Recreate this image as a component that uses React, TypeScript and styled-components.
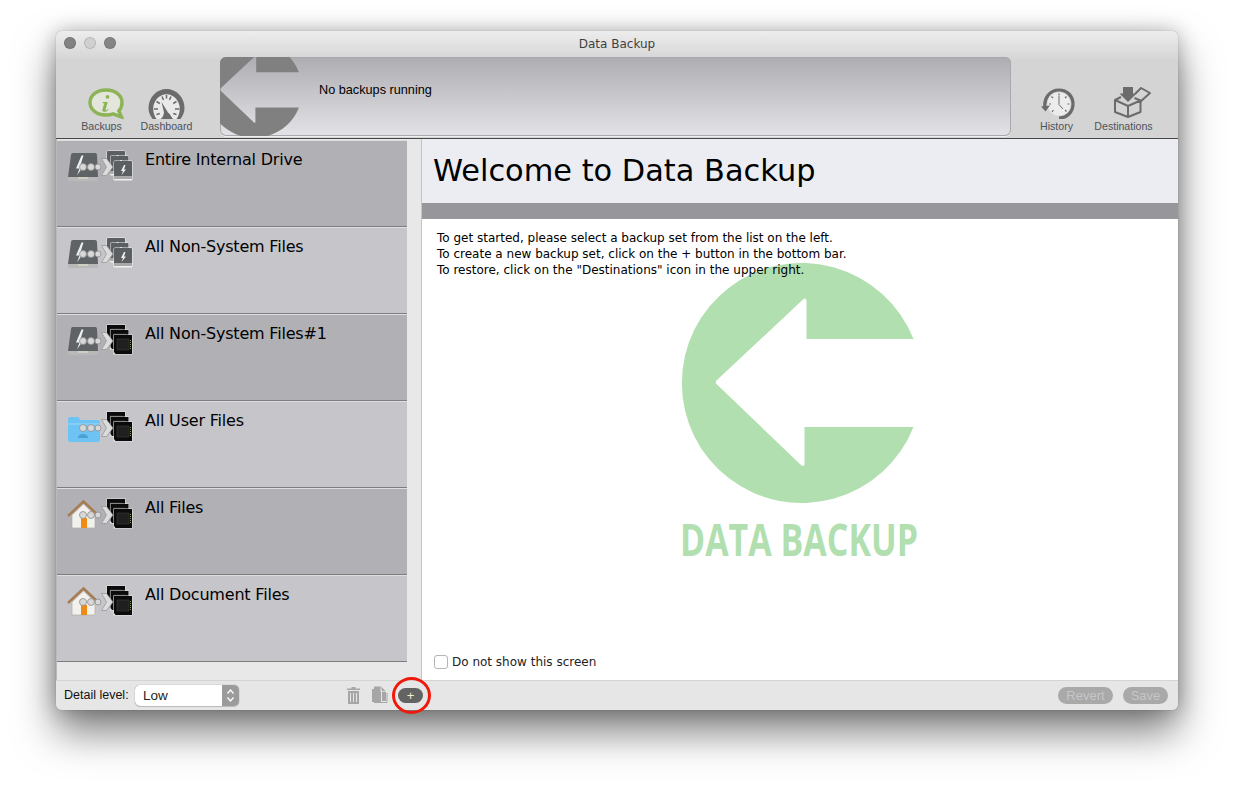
import React from "react";
import styled, { createGlobalStyle } from "styled-components";

const Global = createGlobalStyle`
  html, body { margin: 0; padding: 0; background: #fff; }
  body { font-family: "DejaVu Sans", "Liberation Sans", sans-serif; overflow: hidden; }
  #root { width: 1234px; height: 790px; }
`;

const Page = styled.div`
  padding: 31px 56px;
  box-sizing: border-box;
  width: 1234px;
  height: 790px;
`;

const Win = styled.div`
  width: 1122px;
  height: 679px;
  border-radius: 6px;
  display: flex;
  flex-direction: column;
  background: #e6e6e6;
  box-shadow: 0 22px 40px rgba(0, 0, 0, 0.5), 0 0 20px rgba(0, 0, 0, 0.25), 0 0 1px rgba(0, 0, 0, 0.45);
`;

const Header = styled.header`
  height: 108px;
  box-sizing: border-box;
  flex: none;
  border-bottom: 1px solid #45474a;
  border-radius: 6px 6px 0 0;
  background: linear-gradient(#ededed 0, #d4d4d4 30px, #d4d4d4 100%);
  display: flex;
  flex-direction: column;
`;

const TitleBar = styled.div`
  height: 26px;
  flex: none;
  display: flex;
  align-items: center;
  position: relative;
  justify-content: center;
  font-size: 12px;
  color: #3f3f3f;
`;

const Lights = styled.div`
  position: absolute;
  left: 8px;
  top: 6px;
  display: flex;
  gap: 8px;
`;

const Light = styled.span<{ $c: string }>`
  width: 12px;
  height: 12px;
  border-radius: 50%;
  background: ${(p) => p.$c};
  box-shadow: inset 0 0 0 1px rgba(0, 0, 0, 0.12);
`;

const ToolRow = styled.div`
  display: flex;
  height: 79px;
  padding: 0 21px 0 13px;
`;

const ToolGroup = styled.div`
  display: flex;
  flex: none;
`;

const Tool = styled.div<{ $w?: number }>`
  width: ${(p) => p.$w ?? 65}px;
  display: flex;
  flex-direction: column;
  align-items: center;
  justify-content: flex-end;
  padding-bottom: 3px;
  font-family: "Liberation Sans", sans-serif;
  font-size: 10.6px;
  line-height: 13px;
  color: #4c525c;
`;

const ToolIcon = styled.div<{ $shift?: number }>`
  margin-left: ${(p) => p.$shift ?? 0}px;
  margin-bottom: 1px;
  svg { display: block; }
`;

const Status = styled.div`
  flex: 1;
  margin: 0 12px 0 21px;
  border-radius: 6px;
  background: linear-gradient(#aeadb2, #e3e3e7);
  box-shadow: 0 0 0 1px #a9a9ad inset, 0 1px 0 #f0f0f0;
  display: flex;
  overflow: hidden;
`;

const StatusLogo = styled.svg`
  width: 80px;
  height: 79px;
  flex: none;
`;

const StatusText = styled.div`
  margin: 26px 0 0 19px;
  font-size: 12.7px;
  line-height: 14px;
  font-family: "Liberation Sans", sans-serif;
  color: #000;
`;

const Main = styled.div`
  flex: 1;
  display: flex;
  min-height: 0;
`;

const Sidebar = styled.aside`
  width: 366px;
  flex: none;
  box-sizing: border-box;
  padding-top: 1px;
  background: #e8e8e8;
  border-right: 1px solid #c4c4c4;
  border-left: 1px solid #b9b9b9;
`;

const List = styled.div`
  width: 350px;
  display: flex;
  flex-direction: column;
`;

const Row = styled.div<{ $dark: boolean }>`
  height: 87px;
  box-sizing: border-box;
  display: flex;
  align-items: flex-start;
  padding: 9px 0 0 10px;
  background: ${(p) => (p.$dark ? "#b1b0b5" : "#c6c5c9")};
  border-top: 1px solid #dedede;
  border-bottom: 1px solid #7e7e80;
`;

const RowLabel = styled.div`
  margin-left: 12px;
  font-size: 16px;
  line-height: 20px;
  letter-spacing: -0.2px;
  color: #000;
`;

const Content = styled.section`
  flex: 1;
  background: #fff;
  display: flex;
  flex-direction: column;
  position: relative;
`;

const Hero = styled.div`
  height: 64px;
  flex: none;
  box-sizing: border-box;
  padding: 0 0 2px 11px;
  background: #ebedf2;
  display: flex;
  align-items: center;
  font-size: 30.4px;
  color: #000;
`;

const Band = styled.div`
  height: 16px;
  flex: none;
  background: #97979b;
`;

const Intro = styled.div`
  position: relative;
  z-index: 1;
  padding: 11px 0 0 15px;
  font-size: 12px;
  line-height: 16px;
  color: #000;
  flex: 1;
`;

const Watermark = styled.svg`
  position: absolute;
  left: 259px;
  top: 123px;
  width: 240px;
  height: 300px;
  overflow: visible;
`;

const CheckRow = styled.label`
  display: flex;
  align-items: center;
  gap: 4px;
  padding: 0 0 10px 12px;
  font-size: 12px;
  line-height: 16px;
  color: #222;
`;

const Box = styled.span`
  width: 12px;
  height: 12px;
  border: 1px solid #b5b5b5;
  border-radius: 3px;
  background: #fff;
`;

const Footer = styled.footer`
  height: 30px;
  flex: none;
  box-sizing: border-box;
  display: flex;
  align-items: center;
  padding: 0 10px 1px 8px;
  background: #e6e6e6;
  border-top: 1px solid #d4d4d4;
  border-radius: 0 0 6px 6px;
  font-family: "Liberation Sans", sans-serif;
  position: relative;
`;

const DetailLabel = styled.span`
  font-size: 12.5px;
  width: 65px;
  white-space: nowrap;
  color: #111;
`;

const Select = styled.div`
  margin-left: 6px;
  width: 104px;
  height: 21px;
  border-radius: 5px;
  background: #fff;
  box-shadow: 0 0 1px rgba(0, 0, 0, 0.5), 0 1px 1px rgba(0, 0, 0, 0.15);
  display: flex;
  align-items: center;
  justify-content: space-between;
  padding-left: 8px;
  box-sizing: border-box;
  font-size: 13.5px;
  color: #222;
  overflow: hidden;
`;

const SelectArrows = styled.div`
  width: 17px;
  height: 100%;
  background: #9b9b9b;
  display: flex;
  align-items: center;
  justify-content: center;
`;

const FooterIcons = styled.div`
  margin-left: 107px;
  display: flex;
  align-items: center;
  gap: 10px;
`;

const PlusWrap = styled.div`
  position: relative;
`;

const PlusBtn = styled.div`
  width: 25px;
  height: 15px;
  border-radius: 8px;
  background: #636363;
  color: #f5eecb;
  font-size: 13px;
  line-height: 15px;
  text-align: center;
`;

const Ring = styled.div`
  position: absolute;
  left: -6px;
  right: -8px;
  top: -11px;
  bottom: -11px;
  border: 3px solid #f0180a;
  border-radius: 50%;
`;

const Actions = styled.div`
  margin-left: auto;
  display: flex;
  gap: 10px;
`;

const Pill = styled.div<{ $w: number }>`
  width: ${(p) => p.$w}px;
  height: 17px;
  border-radius: 9px;
  background: #a9a9a9;
  color: #c6c6c6;
  font-size: 13px;
  line-height: 17px;
  text-align: center;
`;

const LOGO =
  "M913.5 339H806.5V301Q806 297 803 299.5L717 380Q714.5 382 717 384.5L801 465Q804.5 467.5 804.5 464V427H913.5A120 120 0 1 1 913.5 339Z";

const Bubble = () => (
  <svg width="38" height="32" viewBox="0 0 38 32">
    <path
      d="M19 3C9.500 3 3 8.600 3 15.500S9.500 28 19 28c2.600 0 5-.4 7.200-1.200L34.500 30l-2.600-6.200C34 21.700 35 18.800 35 15.500 35 8.600 28.500 3 19 3Z"
      fill="#e4e6dc"
      stroke="#8cb356"
      strokeWidth="3.400"
    />
    <circle cx="20.500" cy="9.800" r="1.900" fill="#8cb356" />
    <path d="M15.500 15h5.200l-2.300 8.200c1 .2 1.800-.4 2.700-1.300l.6.500c-1.400 1.700-3 2.500-5 2.300-1.500-.2-1.600-1.200-1.200-2.400l1.800-6c-.6-.1-1.200 0-1.700 0Z" fill="#8cb356" />
  </svg>
);

const Gauge = () => (
  <svg width="38" height="32" viewBox="0 0 38 32">
    <path d="M4.500 32C2 28.500 .5 25 .5 21 .5 10 9 2 18.500 2s18 8 18 19c0 4-1.500 7.500-4 11Z" fill="#6b6b6b" />
    <path d="M8.500 32c-2-2.700-3.300-6.500-3.300-10.500C5.200 14 11.300 7.200 18.500 7.200S31.800 14 31.800 21.500c0 4-1.300 7.800-3.300 10.500Z" fill="#e9e9e9" />
    <path d="M6 22h4M27 22h4.500M8.500 14.500l3.300 2M28.500 14.500l-3.300 2M14 9.500l1.500 3.500M23 9.500l-1.500 3.500M18.500 8v3.500M8.500 27.500l3.300-1M28.500 27.500l-3.300-1" stroke="#6b6b6b" strokeWidth="1.500" />
    <path d="M12.500 32c2-1 3-3.500 3.500-6.500L13.500 15l6.500 10.500c1.500.8 3 4 5 6.500Z" fill="#6b6b6b" />
  </svg>
);

const HistoryIcon = () => (
  <svg width="36" height="32" viewBox="0 0 36 32">
    <path d="M5 21C3.500 11 10 3 19 3c8 0 14 6 14 14s-6 14-14 14" fill="none" stroke="#6b6b6b" strokeWidth="3.200" />
    <circle cx="19" cy="17" r="11.500" fill="#ececec" />
    <path d="M1 19.500 5.500 24.500 10 18.500Z" fill="#6b6b6b" />
    <path d="M19 9v8.500l4 4.500" fill="none" stroke="#6b6b6b" strokeWidth="1" />
    <path d="M19 6.500v2M29.500 17h-2M11 17H9M26.500 9.500 25 11M11.500 9.500 13 11M26.500 24.500 25 23M12 25l1.500-2" stroke="#6b6b6b" strokeWidth="1.200" />
  </svg>
);

const BoxIcon = () => (
  <svg width="39" height="33" viewBox="0 0 39 33">
    <path d="M2 14 15 20v11L2 26ZM27.500 14.500 15 20v11l12.500-5Z" fill="#d4d4d4" stroke="#6b6b6b" strokeWidth="2" strokeLinejoin="round" />
    <path d="M2 14l6-3M27.500 14.500 21.500 12" stroke="#6b6b6b" strokeWidth="2" />
    <path d="M22 8l6-6 9 5-10 9" fill="none" stroke="#6b6b6b" strokeWidth="2" strokeLinejoin="round" />
    <path d="M10 1h10v6.500h3.500L15 16 6.500 7.500H10Z" fill="#6b6b6b" />
  </svg>
);

const Source = ({ kind }: { kind: string }) => {
  if (kind === "drive")
    return (
      <g>
        <path d="M6 3h22q2 0 2 2l1 22H1L4 5q0-2 2-2Z" fill="#606366" />
        <path d="M1 27h30v2.500q0 1.500-2 1.500H3q-2 0-2-1.500Z" fill="#b9b9b9" />
        <path d="M11 28h10" stroke="#e8e4c8" strokeWidth="1" />
        <path d="M14.500 5.500 9 18.500h3.500l-2.500 7L17 15h-3.500l3-9.500Z" fill="#efefef" />
      </g>
    );
  if (kind === "folder")
    return (
      <g>
        <path d="M1 8q0-2 2-2h8l3 3h17q2 0 2 2v18q0 2-2 2H3q-2 0-2-2Z" fill="#6ec3f5" />
        <path d="M1 13h32" stroke="#9bd8fa" strokeWidth="1" />
        <path d="M11 27c0-3 3-4 5-4s5 1 5 4Z" fill="#4e9fd5" />
      </g>
    );
  return (
    <g>
      <path d="M5 17v13h23V17L16.500 6Z" fill="#f2f1ee" stroke="#b0aeaa" strokeWidth=".7" />
      <path d="M1 18 16.500 3.500 32 18" fill="none" stroke="#a67c52" strokeWidth="2.400" />
      <rect x="14" y="20" width="6" height="10" fill="#ef8a12" />
    </g>
  );
};

const Card = ({ x, y, kind }: { x: number; y: number; kind: string }) =>
  kind === "sd" ? (
    <g transform={`translate(${x} ${y})`}>
      <rect x="-.5" y="-.5" width="19" height="20" fill="#e5e5e5" />
      <path d="M0 0h18v19H1.500L0 17Z" fill="#0b0b0b" />
      <rect x="3" y="4" width="12" height="11" fill="#1f1f1f" stroke="#3c3c3c" strokeWidth=".6" />
      <path d="M16.500 5v9" stroke="#7fa24a" strokeWidth="1" strokeDasharray="1 1" />
    </g>
  ) : (
    <g transform={`translate(${x} ${y})`}>
      <rect x="-.5" y="-.5" width="19" height="20" rx="1.500" fill="#efefef" />
      <rect x="0" y="0" width="18" height="18" rx="1" fill="#5c5f62" />
      <path d="M0 15h18v3H0Z" fill="#a9a9a9" />
      <path d="M10 4 7 10h2l-1.500 4L12 8.500h-2l1.500-4.500Z" fill="#eee" />
    </g>
  );

const BackupIcon = ({ src, dst }: { src: string; dst: string }) => (
  <svg width="66" height="34" viewBox="0 0 66 34" style={{ flex: "none", display: "block" }}>
    <Source kind={src} />
    <g fill="#d8d8d8" stroke="#8d8d8d" strokeWidth=".8">
      <circle cx="16" cy="17" r="3.500" />
      <circle cx="24" cy="17" r="3.500" />
      <circle cx="31" cy="17" r="3" />
    </g>
    <Card x={40} y={1} kind={dst} />
    <Card x={43.500} y={6} kind={dst} />
    <Card x={47} y={11} kind={dst} />
    <path d="M34.500 8.500h5l6.500 8.500-6.500 8.500h-5l5-8.500Z" fill="#dcdcdc" stroke="#8f8f8f" strokeWidth=".7" />
  </svg>
);

const rows = [
  { label: "Entire Internal Drive", src: "drive", dst: "flash" },
  { label: "All Non-System Files", src: "drive", dst: "flash" },
  { label: "All Non-System Files#1", src: "drive", dst: "sd" },
  { label: "All User Files", src: "folder", dst: "sd" },
  { label: "All Files", src: "home", dst: "sd" },
  { label: "All Document Files", src: "home", dst: "sd" },
];

export default function App() {
  return (
    <Page>
      <Global />
      <Win>
        <Header>
          <TitleBar>
            <Lights>
              <Light $c="#828282" />
              <Light $c="#d0d0d0" />
              <Light $c="#858585" />
            </Lights>
            Data Backup
          </TitleBar>
          <ToolRow>
            <ToolGroup>
              <Tool>
                <ToolIcon $shift={8}>
                  <Bubble />
                </ToolIcon>
                Backups
              </Tool>
              <Tool>
                <ToolIcon $shift={1}>
                  <Gauge />
                </ToolIcon>
                Dashboard
              </Tool>
            </ToolGroup>
            <Status>
              <StatusLogo viewBox="716 301 200 197.500">
                <path d={LOGO} fill="#808080" />
              </StatusLogo>
              <StatusText>No backups running</StatusText>
            </Status>
            <ToolGroup>
              <Tool $w={67}>
                <ToolIcon $shift={2}>
                  <HistoryIcon />
                </ToolIcon>
                History
              </Tool>
              <Tool $w={67}>
                <ToolIcon $shift={17}>
                  <BoxIcon />
                </ToolIcon>
                Destinations
              </Tool>
            </ToolGroup>
          </ToolRow>
        </Header>
        <Main>
          <Sidebar>
            <List>
              {rows.map((r, i) => (
                <Row key={r.label + i} $dark={i % 2 === 0}>
                  <BackupIcon src={r.src} dst={r.dst} />
                  <RowLabel>{r.label}</RowLabel>
                </Row>
              ))}
            </List>
          </Sidebar>
          <Content>
            <Hero>Welcome to Data Backup</Hero>
            <Band />
            <Watermark viewBox="681 262 240 300">
              <path d={LOGO} fill="#b1dfaf" />
              <text
                x="680"
                y="556"
                textLength="238"
                lengthAdjust="spacingAndGlyphs"
                fontFamily="'Open Sans', sans-serif"
                fontWeight="700"
                fontSize="45"
                fill="#b1dfaf"
              >
                DATA BACKUP
              </text>
            </Watermark>
            <Intro>
              To get started, please select a backup set from the list on the left.
              <br />
              To create a new backup set, click on the + button in the bottom bar.
              <br />
              To restore, click on the "Destinations" icon in the upper right.
            </Intro>
            <CheckRow>
              <Box />
              Do not show this screen
            </CheckRow>
          </Content>
        </Main>
        <Footer>
          <DetailLabel>Detail level:</DetailLabel>
          <Select>
            Low
            <SelectArrows>
              <svg width="9" height="15" viewBox="0 0 9 15">
                <path d="M1.500 5.500 4.500 2l3 3.500M1.500 9.500l3 3.500 3-3.500" fill="none" stroke="#fff" strokeWidth="1.300" />
              </svg>
            </SelectArrows>
          </Select>
          <FooterIcons>
            <svg width="15" height="18" viewBox="0 0 15 18">
              <path d="M5.500 1h4v1.500H14V4H1V2.500h4.500ZM2 5h11v13H2Z" fill="#a6a6a6" />
              <path d="M4.500 7v9M7.500 7v9M10.500 7v9" stroke="#e6e6e6" strokeWidth="1" />
            </svg>
            <svg width="17" height="18" viewBox="0 0 17 18">
              <path d="M1 3h8l1 1v12H1Z" fill="#a6a6a6" />
              <path d="M3 0.500h7l5 5V15H11V3.500H3Z" fill="#a6a6a6" />
              <path d="M10 0.500v5h5" fill="none" stroke="#e6e6e6" strokeWidth=".8" />
              <path d="M3 16.500h13V7" fill="none" stroke="#a6a6a6" strokeWidth="1" />
            </svg>
            <PlusWrap>
              <PlusBtn>+</PlusBtn>
              <Ring />
            </PlusWrap>
          </FooterIcons>
          <Actions>
            <Pill $w={55}>Revert</Pill>
            <Pill $w={45}>Save</Pill>
          </Actions>
        </Footer>
      </Win>
    </Page>
  );
}
